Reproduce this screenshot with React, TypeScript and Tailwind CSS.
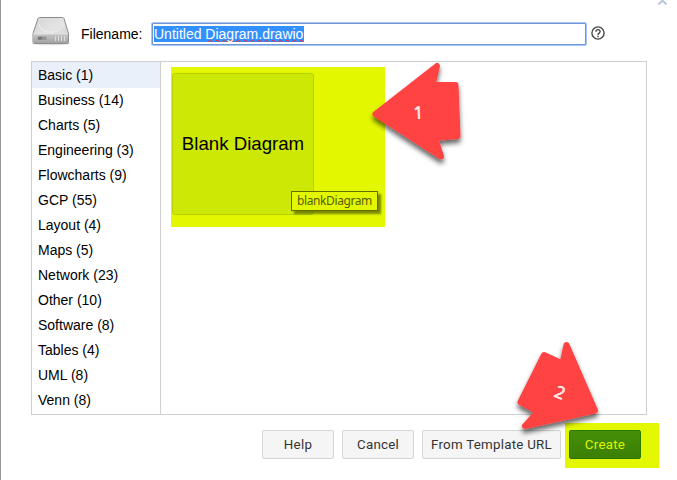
import React from "react";

const categories = [
  "Basic (1)", "Business (14)", "Charts (5)", "Engineering (3)", "Flowcharts (9)",
  "GCP (55)", "Layout (4)", "Maps (5)", "Network (23)", "Other (10)",
  "Software (8)", "Tables (4)", "UML (8)", "Venn (8)",
];

function DriveIcon() {
  return (
    <svg className="block h-[34px] w-[40px]" viewBox="0 0 40 34">
      <defs>
        <linearGradient id="top" x1="0" y1="0" x2="1" y2="1">
          <stop offset="0" stopColor="#d4d4d4" />
          <stop offset=".5" stopColor="#e4e4e4" />
          <stop offset="1" stopColor="#cfcfcf" />
        </linearGradient>
        <linearGradient id="front" x1="0" y1="0" x2="0" y2="1">
          <stop offset="0" stopColor="#c6c6c6" />
          <stop offset="1" stopColor="#a4a4a4" />
        </linearGradient>
      </defs>
      <ellipse cx="20" cy="28.500" rx="19.500" ry="1.800" fill="#000" opacity=".12" />
      <path d="M8.500 2.500H31.500Q32.500 2.500 33 3.500L37.500 18.500V27Q37.500 28.500 36 28.500H3.500Q2 28.500 2 27V18.500L7 3.500Q7.500 2.500 8.500 2.500Z" fill="url(#top)" stroke="#8b8b8b" />
      <path d="M8 9C10 20 30 20 32 9" fill="none" stroke="#efefef" strokeWidth="1" />
      <path d="M2.500 19H37V27Q37 28 36 28H3.500Q2.500 28 2.500 27Z" fill="url(#front)" />
      <path d="M2.500 19H37" stroke="#e8e8e8" strokeWidth=".8" />
      <rect x="6.500" y="21.500" width="9" height="3.500" rx=".5" fill="#969696" />
      <rect x="7" y="22" width="4" height="2.500" fill="#777" />
      <path d="M24.500 21V26M27.500 21V26M30.500 21V26M33.500 21V26" stroke="#dcdcdc" strokeWidth="1" />
    </svg>
  );
}

function Arrow({ points, label, x, y, angle }: { points: string; label: string; x: number; y: number; angle: number }) {
  return (
    <g>
      <polygon points={points} fill="#ff4343" stroke="#ff4343" strokeWidth="6" strokeLinejoin="round" filter="url(#arrowShadow)" />
      <text x={x} y={y} fontSize="17" textAnchor="middle" fill="#ffe9e9" stroke="#ffe9e9" strokeWidth=".7" fontFamily="'Open Sans', sans-serif" transform={`rotate(${angle} ${x} ${y - 6})`}>{label}</text>
    </g>
  );
}

function Button({ children, className }: { children: React.ReactNode; className: string }) {
  return (
    <button className={`flex h-[29px] items-center justify-center rounded-[2px] border [font-family:Roboto,sans-serif] text-[13.33px] tracking-[0.25px] whitespace-nowrap ${className}`}>
      {children}
    </button>
  );
}

export default function App() {
  return (
    <div className="relative h-[480px] w-[677px] overflow-hidden border-l border-[#999] bg-white font-['Liberation_Sans',Arial,sans-serif] text-[14px] text-black">
      <header className="flex h-[61px] items-start pl-[30px]">
        <div className="mt-[15px] w-[50px]"><DriveIcon /></div>
        <label className="mt-[24px] w-[70px] text-[14px] leading-5">Filename:</label>
        <div className="mt-[22px] flex h-[24px] w-[436px] items-center rounded-[2px] border border-[#a5c7fe] bg-white pl-[2px] shadow-[inset_0_0_0_1px_#6f94d0]">
          <span className="h-4 w-[150px] overflow-hidden bg-[#3390ff] text-[14px] leading-4 whitespace-nowrap text-white">
            Untitled <span className="underline decoration-[#ef2635] decoration-wavy decoration-1 underline-offset-[0px] [text-decoration-skip-ink:none]">Diagram.drawio</span>
          </span>
        </div>
        <svg className="mt-[26px] ml-1 block h-[15px] w-[15px]" viewBox="0 0 15 15" fill="none" stroke="#484848" strokeWidth="1.4">
          <circle cx="7" cy="7" r="6.100" />
          <path d="M4.900 5.800C4.900 2.900 9.100 2.900 9.100 5.600C9.100 7.200 7 7.100 7 8.900M7 9.800V11.200" />
        </svg>
      </header>

      <main className="ml-[30px] flex h-[354px] w-[616px] border border-[#cfcfcf]">
        <nav className="w-[129px] border-r border-[#cfcfcf] text-[14px]">
          {categories.map((name, i) => (
            <div key={name} className={`pl-[6px] leading-[25px] ${i === 0 ? "h-[26px] bg-[#e9f0f9] pt-px" : "h-[25px]"}`}>{name}</div>
          ))}
        </nav>
        <section className="pt-[5px] pl-[10px]">
          <div className="relative h-[160px] w-[214px] bg-[#e3f800] pt-[6px] pl-px">
            <div className="flex h-[142px] w-[142px] items-center justify-center rounded-[3px] border border-[#b6d005] bg-[#cee806] text-[18.67px] whitespace-nowrap">
              Blank Diagram
            </div>
            <div className="absolute top-[124px] left-[120px] flex h-[20px] w-[87px] items-center justify-center border border-[#646d00] bg-[#e3f800] font-['Noto_Sans',sans-serif] text-[12px] tracking-[-0.4px] text-[#575d00] shadow-[3px_3px_2px_rgba(55,65,0,0.6)]">
              blankDiagram
            </div>
          </div>
        </section>
      </main>

      <footer className="flex items-start pt-[8px] pl-[261px]">
        <div className="mt-[7px] flex gap-2">
          <Button className="w-[72px] border-[#d6d6d6] bg-[#f5f5f5] text-[#333]">Help</Button>
          <Button className="w-[72px] border-[#d6d6d6] bg-[#f5f5f5] text-[#333]">Cancel</Button>
          <Button className="w-[139px] border-[#d6d6d6] bg-[#f5f5f5] text-[#333]">From Template URL</Button>
        </div>
        <div className="ml-1 h-[45px] w-[94px] bg-[#e3f800] pt-[7px] pl-1">
          <Button className="w-[72px] border-[#287800] bg-linear-to-b from-[#458f07] to-[#3b7f05] text-[#dff500]">Create</Button>
        </div>
      </footer>

      <svg className="pointer-events-none absolute top-0 -left-px h-[480px] w-[677px]" viewBox="0 0 677 480">
        <defs>
          <filter id="arrowShadow" x="-20%" y="-20%" width="140%" height="140%">
            <feDropShadow dx="0" dy="4" stdDeviation="2.500" floodColor="#000" floodOpacity=".6" />
          </filter>
        </defs>
        <path d="M658.500 4.500L662.500 .5L666.500 4.500" fill="none" stroke="#b8c6dd" strokeWidth="2" />
        <Arrow points="375.500,114 437,66 432.500,85 455.500,85 457.500,136 435,138 441,156.500" label="1" x={418.5} y={118.5} angle={-2} />
        <Arrow points="566.500,345 562.500,363.500 544,355 520.500,402 538,411.500 525,426 595,410.500" label="2" x={560} y={398.5} angle={22} />
      </svg>
    </div>
  );
}
